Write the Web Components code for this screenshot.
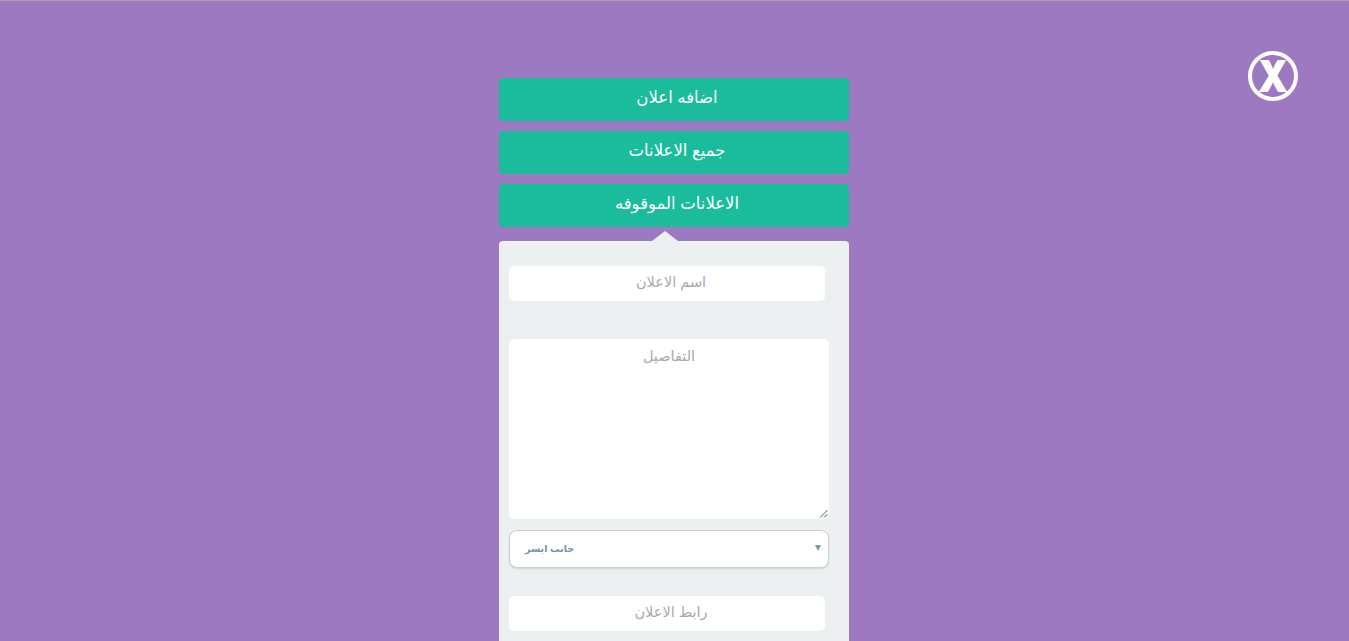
<!DOCTYPE html>
<html lang="ar">
<head>
<meta charset="utf-8">
<title>Ads</title>
<style>
  html, body { margin: 0; height: 100%; overflow: hidden; background: #9d79c2; }
</style>
</head>
<body>
<ads-overlay>
  <close-button slot="close">X</close-button>
  <menu-button>اضافه اعلان</menu-button>
  <menu-button>جميع الاعلانات</menu-button>
  <menu-button>الاعلانات الموقوفه</menu-button>
  <ad-panel slot="panel">
    <text-field>اسم الاعلان</text-field>
    <text-area>التفاصيل</text-area>
    <select-field>جانب ايسر</select-field>
    <text-field>رابط الاعلان</text-field>
  </ad-panel>
</ads-overlay>

<script>
const ARABIC_FONT = '"Liberation Sans", "DejaVu Sans", sans-serif';

class BaseElement extends HTMLElement {
  constructor(html) {
    super();
    this.attachShadow({ mode: 'open' }).innerHTML = html;
  }
}

class AdsOverlay extends BaseElement {
  constructor() {
    super(`
      <style>
        :host {
          display: block;
          position: relative;
          height: 641px;
          overflow: hidden;
          box-sizing: border-box;
          border-top: 1px solid #a9a0b2;
          background: #9d79c2;
          font-family: ${ARABIC_FONT};
        }
        .column {
          width: 350px;
          margin: 77px 0 0 499px;
          display: flex;
          flex-direction: column;
        }
        .menu {
          display: flex;
          flex-direction: column;
          gap: 10px;
        }
        .panel-wrap { margin-top: 14px; }
      </style>
      <slot name="close"></slot>
      <div class="column">
        <div class="menu"><slot></slot></div>
        <div class="panel-wrap"><slot name="panel"></slot></div>
      </div>
    `);
  }
}

class CloseButton extends BaseElement {
  constructor() {
    super(`
      <style>
        :host {
          position: absolute;
          top: 50px;
          left: 1248px;
          width: 50px;
          height: 50px;
          box-sizing: border-box;
          border: 4px solid #fff;
          border-radius: 50%;
          display: flex;
          align-items: center;
          justify-content: center;
          color: #fff;
          font: 900 38px/40px Inter, "Liberation Sans", sans-serif;
        }
        span { display: block; transform: scaleY(1.15); }
      </style>
      <span><slot></slot></span>
    `);
  }
}

class MenuButton extends BaseElement {
  constructor() {
    super(`
      <style>
        :host {
          display: flex;
          align-items: center;
          justify-content: center;
          height: 43px;
          padding: 0 0 4px 6px;
          box-sizing: border-box;
          border-radius: 4px;
          background: #1abc9c;
          color: #fff;
          font-size: 16.5px;
          direction: rtl;
        }
      </style>
      <slot></slot>
    `);
  }
}

class AdPanel extends BaseElement {
  constructor() {
    super(`
      <style>
        :host {
          display: block;
          position: relative;
          height: 480px;
          box-sizing: border-box;
          padding: 25px 10px 0;
          border-radius: 4px;
          background: #ecf0f1;
        }
        .arrow {
          position: absolute;
          top: -10px;
          left: 153px;
          width: 0;
          height: 0;
          border-left: 13px solid transparent;
          border-right: 13px solid transparent;
          border-bottom: 10px solid #ecf0f1;
        }
        .fields { display: flex; flex-direction: column; }
        ::slotted(text-field) { margin-bottom: 38px; }
        ::slotted(text-area) { margin-bottom: 11px; }
        ::slotted(select-field) { margin-bottom: 28px; }
      </style>
      <div class="arrow"></div>
      <div class="fields"><slot></slot></div>
    `);
  }
}

class TextField extends BaseElement {
  constructor() {
    super(`
      <style>
        :host {
          display: flex;
          align-items: center;
          justify-content: center;
          width: 316px;
          height: 35px;
          padding: 0 0 3px 8px;
          box-sizing: border-box;
          border-radius: 5px;
          background: #fff;
          color: #a9a9a9;
          font-size: 14.5px;
          direction: rtl;
        }
      </style>
      <slot></slot>
    `);
  }
}

class TextArea extends BaseElement {
  constructor() {
    super(`
      <style>
        :host {
          display: block;
          position: relative;
          width: 320px;
          height: 180px;
          box-sizing: border-box;
          padding-top: 7px;
          border-radius: 5px;
          background: #fff;
          color: #a9a9a9;
          font-size: 14.5px;
          line-height: 20px;
          text-align: center;
          direction: rtl;
        }
        svg { position: absolute; right: 1px; bottom: 1px; }
      </style>
      <slot></slot>
      <svg width="9" height="9" viewBox="0 0 9 9" fill="none" stroke-width="1">
        <path d="M1 8.5 8.5 1" stroke="#555"/>
        <path d="M5 8.5 8.5 5" stroke="#555"/>
        <path d="M2 8.5 8.5 2" stroke="#ccc"/>
      </svg>
    `);
  }
}

class SelectField extends BaseElement {
  constructor() {
    super(`
      <style>
        :host {
          display: flex;
          align-items: center;
          justify-content: space-between;
          width: 320px;
          height: 38px;
          box-sizing: border-box;
          padding: 0 7px 2px 15px;
          border: 1px solid #ccd0d2;
          border-radius: 8px;
          background: #fff;
          box-shadow: 0 1px 2px rgba(0, 0, 0, .12);
          color: #6f94ae;
          font-size: 9.5px;
          font-weight: bold;
        }
        .label { direction: rtl; }
      </style>
      <span class="label"><slot></slot></span>
      <svg width="6" height="6" viewBox="0 0 6 6"><path d="M0 0h6L3 6z" fill="#7d95a5"/></svg>
    `);
  }
}

customElements.define('ads-overlay', AdsOverlay);
customElements.define('close-button', CloseButton);
customElements.define('menu-button', MenuButton);
customElements.define('ad-panel', AdPanel);
customElements.define('text-field', TextField);
customElements.define('text-area', TextArea);
customElements.define('select-field', SelectField);
</script>
</body>
</html>
